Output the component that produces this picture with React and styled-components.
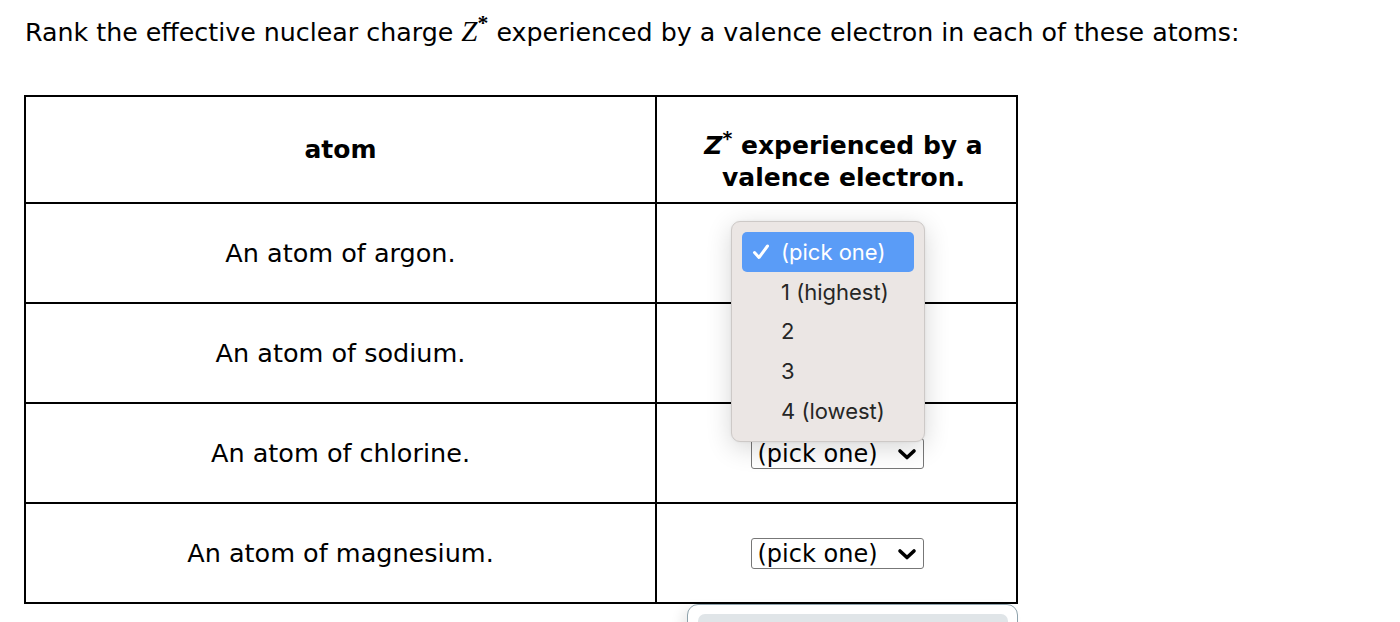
import React from "react";
import styled, { createGlobalStyle } from "styled-components";

const Global = createGlobalStyle`
  html, body { margin: 0; padding: 0; background: #fff; }
  body { font-family: "DejaVu Sans", Verdana, sans-serif; color: #000; }
`;

const Page = styled.div`
  position: relative;
  padding: 16px 0 0 24px;
  height: 606px;
  overflow: hidden;
`;

const Title = styled.p`
  margin: 0 0 0 1px;
  font-size: 25.3px;
  line-height: 30px;
  white-space: nowrap;
`;

const ZVar = styled.span`
  font-family: "Liberation Serif", "Times New Roman", serif;
  font-style: italic;
  font-size: 29px;
`;

const Sup = styled.sup`
  font-size: 0.75em;
  line-height: 0;
  font-style: normal;
  font-weight: bold;
`;

const Table = styled.table`
  margin-top: 47px;
  border-collapse: collapse;
  border: 2px solid #000;
  width: 994px;
`;

const Cell = styled.td`
  border: 2px solid #000;
  text-align: center;
  vertical-align: middle;
  height: ${(p) => (p.$head ? 105 : 98)}px;
  width: ${(p) => (p.$right ? "359px" : "auto")};
  padding: 0;
  font-size: 25.5px;
  font-weight: ${(p) => (p.$head ? "bold" : "normal")};
  line-height: 32px;
`;

const HeadText = styled.div`
  font-size: 25px;
  line-height: 32px;
  margin-top: ${(p) => p.$offset || 0}px;
  padding-left: ${(p) => (p.$offset ? 14 : 0)}px;
`;

const Select = styled.span`
  display: inline-flex;
  align-items: center;
  justify-content: space-between;
  box-sizing: border-box;
  width: 173px;
  height: 31px;
  padding: 0 6px 0 6px;
  border: 1.5px solid #777;
  border-radius: 3px;
  font-size: 24px;
  font-weight: normal;
  background: #fff;
  margin-left: 1px;
`;

const Popup = styled.div`
  position: absolute;
  left: 731px;
  top: 221px;
  width: 194px;
  height: 221px;
  box-sizing: border-box;
  padding: 10px 10px;
  background: #ebe6e4;
  border: 1px solid #cdc9c7;
  border-radius: 9px;
  box-shadow: 0 6px 26px rgba(0, 0, 0, 0.16), 0 0 3px rgba(0, 0, 0, 0.06);
  font-family: Inter, "Liberation Sans", Arial, sans-serif;
  font-size: 22px;
  color: #262626;
  display: flex;
  flex-direction: column;
`;

const Option = styled.div`
  display: flex;
  align-items: center;
  height: 40px;
  padding-left: 39px;
  border-radius: 5px;
  position: relative;
  white-space: nowrap;
  background: ${(p) => (p.$active ? "#5a9cf7" : "transparent")};
  color: ${(p) => (p.$active ? "#fff" : "#262626")};
`;

const Check = styled.span`
  position: absolute;
  left: 10px;
  top: 11px;
  display: flex;
`;

const Footer = styled.div`
  position: absolute;
  left: 687px;
  top: 604px;
  width: 331px;
  height: 40px;
  box-sizing: border-box;
  border: 1.5px solid #8ea2ac;
  border-radius: 11px;
  padding: 9px 9px 0 10px;
  background: #fff;
  box-shadow: -6px 4px 12px rgba(0, 0, 0, 0.08);
`;

const FooterBar = styled.div`
  height: 30px;
  background: #e0e5e8;
  border-radius: 7px;
`;

const Chevron = () => (
  <svg width="20" height="14" viewBox="0 0 20 14">
    <path d="M3 4 L10 10.5 L17 4" fill="none" stroke="#000" strokeWidth="3.6" strokeLinecap="round" strokeLinejoin="round" />
  </svg>
);

const PickSelect = () => (
  <Select>
    <span>(pick one)</span>
    <Chevron />
  </Select>
);

const atoms = ["argon", "sodium", "chlorine", "magnesium"];
const options = ["(pick one)", "1 (highest)", "2", "3", "4 (lowest)"];

export default function App() {
  return (
    <>
      <Global />
      <Page>
        <Title>
          Rank the effective nuclear charge <ZVar>Z<Sup>*</Sup></ZVar> experienced by a valence electron in each of these atoms:
        </Title>
        <Table>
          <tbody>
            <tr>
              <Cell $head>
                <HeadText>atom</HeadText>
              </Cell>
              <Cell $head $right>
                <HeadText $offset={24}>
                  <i>Z</i>
                  <Sup>*</Sup> experienced by a
                  <br />
                  valence electron.
                </HeadText>
              </Cell>
            </tr>
            {atoms.map((a) => (
              <tr key={a}>
                <Cell>An atom of {a}.</Cell>
                <Cell $right>
                  <PickSelect />
                </Cell>
              </tr>
            ))}
          </tbody>
        </Table>
        <Popup>
          {options.map((o, i) => (
            <Option key={o} $active={i === 0}>
              {i === 0 && (
                <Check>
                  <svg width="18" height="18" viewBox="0 0 18 18">
                    <path d="M2.5 9.5 L7 14.5 L15.5 3" fill="none" stroke="#fff" strokeWidth="3" strokeLinecap="round" strokeLinejoin="round" />
                  </svg>
                </Check>
              )}
              {o}
            </Option>
          ))}
        </Popup>
        <Footer>
          <FooterBar />
        </Footer>
      </Page>
    </>
  );
}
